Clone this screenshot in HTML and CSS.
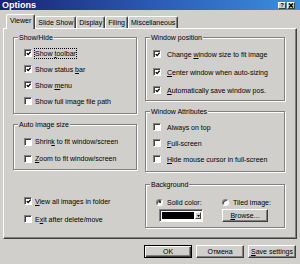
FILE: index.html
```html
<!DOCTYPE html>
<html lang="en">
<head>
  <meta charset="UTF-8">
  <meta name="viewport" content="width=device-width, initial-scale=1.0">
  <title>Options</title>
  <link rel="stylesheet" href="styles.css">
</head>
<body>
  <div class="titlebar">
    <span class="title">Options</span>
    <div class="caption-btns">
      <span class="cbtn">?</span>
      <span class="cbtn">
        <svg viewBox="0 0 6 5"><path d="M1 0.5l4 4M5 0.5l-4 4"/></svg>
      </span>
    </div>
  </div>

  <div class="tabs">
    <div class="tab active">Viewer</div>
    <div class="tab">Slide Show</div>
    <div class="tab">Display</div>
    <div class="tab">Filing</div>
    <div class="tab">Miscellaneous</div>
  </div>

  <div class="panel">
    <!-- left column -->
    <div class="col left">
      <fieldset class="group">
        <legend>Show/Hide</legend>
        <div class="rows showhide">
          <label class="check"><span class="box"><svg viewBox="0 0 7 7"><path d="M1 3l2 2 3.5-4"/></svg></span><span class="focus">Show <u>t</u>oolbar</span></label>
          <label class="check"><span class="box"><svg viewBox="0 0 7 7"><path d="M1 3l2 2 3.5-4"/></svg></span><span>Show status <u>b</u>ar</span></label>
          <label class="check"><span class="box"><svg viewBox="0 0 7 7"><path d="M1 3l2 2 3.5-4"/></svg></span><span>Show <u>m</u>enu</span></label>
          <label class="check"><span class="box"></span><span>Show full image file path</span></label>
        </div>
      </fieldset>

      <fieldset class="group autosize">
        <legend>Auto image size</legend>
        <div class="rows">
          <label class="check"><span class="box"></span><span>Shrin<u>k</u> to fit window/screen</span></label>
          <label class="check"><span class="box"></span><span><u>Z</u>oom to fit window/screen</span></label>
        </div>
      </fieldset>

      <div class="loose">
        <label class="check"><span class="box"><svg viewBox="0 0 7 7"><path d="M1 3l2 2 3.5-4"/></svg></span><span><u>V</u>iew all images in folder</span></label>
        <label class="check"><span class="box"></span><span>E<u>x</u>it after delete/move</span></label>
      </div>
    </div>

    <!-- right column -->
    <div class="col right">
      <fieldset class="group">
        <legend>Window position</legend>
        <div class="rows winpos">
          <label class="check"><span class="box"><svg viewBox="0 0 7 7"><path d="M1 3l2 2 3.5-4"/></svg></span><span>Change <u>w</u>indow size to fit image</span></label>
          <label class="check"><span class="box"><svg viewBox="0 0 7 7"><path d="M1 3l2 2 3.5-4"/></svg></span><span><u>C</u>enter window when auto-sizing</span></label>
          <label class="check"><span class="box"><svg viewBox="0 0 7 7"><path d="M1 3l2 2 3.5-4"/></svg></span><span><u>A</u>utomatically save window pos.</span></label>
        </div>
      </fieldset>

      <fieldset class="group attrs">
        <legend>Window Attributes</legend>
        <div class="rows">
          <label class="check"><span class="box"></span><span>Always on top</span></label>
          <label class="check"><span class="box"></span><span><u>F</u>ull-screen</span></label>
          <label class="check"><span class="box"></span><span><u>H</u>ide mouse cursor in full-screen</span></label>
        </div>
      </fieldset>

      <fieldset class="group background">
        <legend>Background</legend>
        <div class="bg-grid">
          <label class="opt"><span class="radio on"></span><span>Solid color:</span></label>
          <label class="opt"><span class="radio"></span><span>Tiled image:</span></label>
          <div class="combo">
            <span class="swatch"></span>
            <span class="drop"><svg viewBox="0 0 5 3"><path d="M0 0h5L2.5 3z"/></svg></span>
          </div>
          <button class="btn browse"><u>B</u>rowse...</button>
        </div>
      </fieldset>
    </div>
  </div>

  <div class="buttons">
    <button class="btn default">OK</button>
    <button class="btn">Отмена</button>
    <button class="btn"><u>S</u>ave settings</button>
  </div>
</body>
</html>
```

FILE: styles.css
```css
* {
  box-sizing: border-box;
}
body {
  margin: 0;
  width: 300px;
  height: 264px;
  overflow: hidden;
  background-color: #d0cfcb;
  font-family: "Liberation Sans", Arial, sans-serif;
  font-size: 7px;
  line-height: 9px;
  color: #000;
}
u {
  text-underline-offset: 1px;
}

/* title bar */
.titlebar {
  height: 10px;
  padding: 0 5px 0 2px;
  display: flex;
  align-items: center;
  justify-content: space-between;
  background: linear-gradient(to right, #1a2370, #2c5fb8 55%, #3c8fdc);
}
.title {
  color: #fff;
  font-weight: bold;
  font-size: 9px;
  line-height: 10px;
}
.caption-btns {
  display: flex;
  gap: 1px;
}
.cbtn {
  width: 8px;
  height: 7px;
  background-color: #d0cfcb;
  border: 1px solid;
  border-color: #fff #404040 #404040 #fff;
  display: flex;
  align-items: center;
  justify-content: center;
  font-size: 6px;
  font-weight: bold;
  line-height: 5px;
}
.cbtn svg {
  width: 6px;
  height: 5px;
  stroke: #000;
  stroke-width: 1.3;
}

/* tabs */
.tabs {
  height: 18px;
  padding-left: 6px;
  display: flex;
  align-items: flex-end;
}
.tab {
  height: 12px;
  padding: 0 2px;
  line-height: 11px;
  border: 1px solid;
  border-bottom: none;
  border-color: #fff #404040 #404040 #fff;
  border-radius: 2px 2px 0 0;
  box-shadow: inset -1px 0 #808080;
}
.tab.active {
  height: 15px;
  margin-bottom: -1px;
  padding: 0 3px;
  line-height: 12px;
  background-color: #d0cfcb;
  position: relative;
  z-index: 1;
}

/* page panel */
.panel {
  height: 211px;
  margin: 0 3px;
  border: 1px solid;
  border-color: #fff #404040 #404040 #fff;
  box-shadow: inset -1px -1px #808080;
  padding: 4px 0 0 9px;
  display: grid;
  grid-template-columns: 124px 140px;
  column-gap: 8px;
  align-items: start;
}

.group {
  margin: 0;
  padding: 0;
  min-width: 0;
  border: 1px solid #808080;
  box-shadow: inset 1px 1px #fff, 1px 1px #fff;
}
.group legend {
  margin-left: 4px;
  padding: 0 1px;
  line-height: 9px;
  background-color: #d0cfcb;
}

.check {
  height: 17px;
  display: flex;
  align-items: center;
  gap: 3px;
  white-space: nowrap;
}
.box {
  flex: none;
  width: 8px;
  height: 8px;
  padding: 1px 0 0 1px;
  background-color: #fff;
  border: 1px solid;
  border-color: #808080 #fff #fff #808080;
  box-shadow: inset 1px 1px #404040;
}
.box svg {
  display: block;
  width: 5px;
  height: 5px;
  fill: none;
  stroke: #000;
  stroke-width: 1.8;
}
.focus {
  outline: 1px dotted #000;
  outline-offset: 0;
}

/* left column */
.left .check {
  padding-left: 10px;
}
.showhide {
  padding: 3px 0 4px;
}
.showhide .check {
  height: 16px;
}
.autosize {
  margin-top: 6px;
}
.autosize .rows {
  padding: 4px 0 2px;
}
.loose {
  margin-top: 22px;
  padding-left: 1px;
}
.loose .check {
  height: 18px;
}

/* right column */
.right .check {
  padding-left: 7px;
  gap: 6px;
}
.winpos {
  padding: 3px 0 1px;
}
.winpos .check {
  height: 18px;
}
.attrs {
  margin-top: 6px;
}
.attrs .rows {
  padding: 3px 0 4px;
}
.attrs .check {
  height: 16px;
}
.background {
  margin-top: 8px;
}
.bg-grid {
  padding: 7px 0 5px 10px;
  display: grid;
  grid-template-columns: 66px 60px;
  grid-template-rows: 12px 13px;
  row-gap: 1px;
  align-items: center;
}
.opt {
  display: flex;
  align-items: center;
  gap: 4px;
}
.radio {
  flex: none;
  width: 7px;
  height: 7px;
  border-radius: 50%;
  background-color: #fff;
  border: 1px solid;
  border-color: #808080 #fff #fff #808080;
  box-shadow: inset 1px 1px #404040;
  display: flex;
  align-items: center;
  justify-content: center;
}
.radio.on::after {
  content: "";
  width: 2px;
  height: 2px;
  border-radius: 50%;
  background-color: #000;
}
.combo {
  width: 44px;
  height: 13px;
  margin-left: 3px;
  padding: 2px 1px 2px 2px;
  display: flex;
  background-color: #fff;
  border: 1px solid;
  border-color: #808080 #fff #fff #808080;
  box-shadow: inset 1px 1px #404040;
}
.swatch {
  flex: 1;
  background-color: #000;
  outline: 1px solid #fff;
}
.drop {
  width: 6px;
  margin-left: 1px;
  background-color: #d0cfcb;
  border: 1px solid;
  border-color: #fff #404040 #404040 #fff;
  display: flex;
  align-items: center;
  justify-content: center;
}
.drop svg {
  width: 3px;
  height: 2px;
  fill: #000;
}

/* buttons */
.btn {
  width: 48px;
  height: 13px;
  padding: 0;
  font: inherit;
  color: #000;
  background-color: #d0cfcb;
  border: 1px solid;
  border-color: #fff #404040 #404040 #fff;
  box-shadow: inset -1px -1px #808080;
  display: flex;
  align-items: center;
  justify-content: center;
}
.btn.default {
  border-color: #000;
  box-shadow: inset 1px 1px #fff, inset -1px -1px #404040, inset -2px -2px #808080;
}
.browse {
  width: 46px;
}
.buttons {
  padding: 6px 4px 0 0;
  display: flex;
  justify-content: flex-end;
  gap: 4px;
}
```
